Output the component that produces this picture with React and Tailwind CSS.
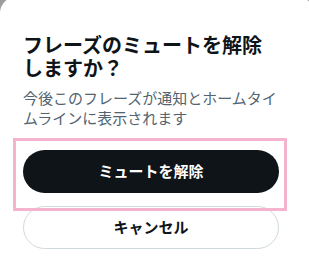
export default function App() {
  return (
    <div className="w-[309px] h-[271px] overflow-hidden bg-[#9c9c9c]">
      <div
        className="w-[314px] h-[290px] -mt-[3px] bg-white rounded-[16px] pl-[23px] pt-[36px]"
        style={{ fontFamily: '"Noto Sans CJK JP", "Noto Sans", sans-serif' }}
      >
        <div className="w-[256px]">
          <h1 className="text-[20px] leading-[23px] font-bold text-[#0f1419]">
            フレーズのミュートを解除しますか？
          </h1>
          <p className="mt-[9px] text-[15px] leading-[20px] text-[#536471]">
            今後このフレーズが通知とホームタイムラインに表示されます
          </p>
          <div className="relative mt-[22px]">
            <button className="w-full h-[43px] rounded-full bg-[#0f1419] text-white text-[15px] font-bold">
              ミュートを解除
            </button>
            <div className="absolute -left-[10px] -top-[12px] w-[274px] h-[73px] border-[3px] border-[#f4b4cd] pointer-events-none" />
          </div>
          <button className="mt-[13px] w-full h-[43px] rounded-full border border-[#cfd9de] bg-white text-[#0f1419] text-[15px] font-bold">
            キャンセル
          </button>
        </div>
      </div>
    </div>
  )
}
